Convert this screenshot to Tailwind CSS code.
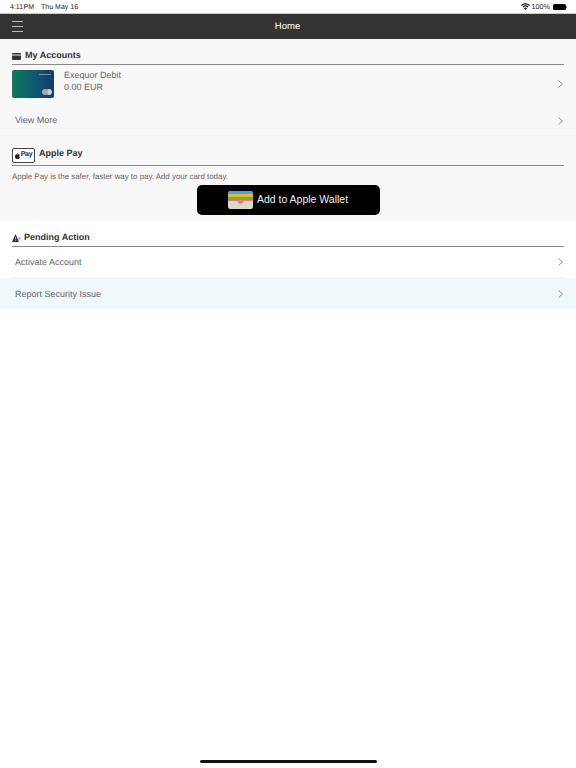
<!DOCTYPE html>
<html lang="en">
<head>
    <meta charset="UTF-8">
    <meta name="viewport" content="width=device-width, initial-scale=1.0">
    <title>Home</title>
    <script src="https://cdn.jsdelivr.net/npm/@tailwindcss/browser@4"></script>
</head>
<body class="relative h-[768px] w-[576px] overflow-hidden bg-white font-['Liberation_Sans',Arial,sans-serif] text-[#666] [text-rendering:geometricPrecision]">

    <!-- Status bar -->
    <div class="flex h-[13px] items-center justify-between pl-[10px] pr-[9px] pt-[1px] text-[7px] text-[#222]">
        <div class="flex gap-[7px] pt-[2px]"><span class="[word-spacing:-1.5px]">4:11 PM</span><span>Thu May 16</span></div>
        <div class="flex items-center gap-[2px]">
            <svg width="9" height="7" viewBox="0 0 18 14" fill="#111"><path d="M9 14 6 10.600a4.400 4.400 0 0 1 6 0zM4.600 9 3 7.200a8.800 8.800 0 0 1 12 0L13.400 9a6.500 6.500 0 0 0-8.800 0zM1.600 5.800 0 4a13.300 13.300 0 0 1 18 0l-1.600 1.800a11 11 0 0 0-14.800 0z"/></svg>
            <span class="pt-[1px] text-[7.200px]">100%</span>
            <div class="ml-[1px] flex items-center">
                <div class="h-[6px] w-[13px] rounded-[1.5px] bg-black"></div>
                <div class="h-[2px] w-[1px] bg-[#888]"></div>
            </div>
        </div>
    </div>

    <!-- Header -->
    <header class="relative flex h-[26px] items-center justify-center border-t border-[#ccc] bg-[#333] text-[9.500px] text-white">
        <div class="absolute left-[12px] top-[7px] flex w-[11px] flex-col gap-[4px]">
            <div class="h-px bg-[#bbb]"></div>
            <div class="h-px bg-[#bbb]"></div>
            <div class="h-px bg-[#bbb]"></div>
        </div>
        <span class="mr-px pt-[1px]">Home</span>
    </header>

    <!-- My Accounts -->
    <section class="h-[97px] border-b border-[#f1f1f1] bg-[#f8f8f8] px-[12px]">
        <div class="flex h-[26px] items-center gap-[4px] border-b border-[#888] pt-[9px] text-[9px] font-bold text-[#333]">
            <svg width="9" height="7" viewBox="0 0 9 7"><rect width="9" height="7" rx="1" fill="#333"/><rect y="1.500" width="9" height="1" fill="#eee"/></svg>
            <span>My Accounts</span>
        </div>
        <div class="flex h-[37px] items-center pt-[1px]">
            <div class="relative h-[28px] w-[42px] overflow-hidden rounded-[2px] bg-gradient-to-r from-[#0e7a55] via-[#0f5a73] to-[#163a68]">
                <div class="absolute right-[3px] top-[4px] h-px w-[12px] bg-white/40"></div>
                <div class="absolute bottom-[3px] right-[2px] size-[6px] rounded-full bg-[#c9cfcf]"></div>
                <div class="absolute bottom-[3px] right-[6px] size-[6px] rounded-full bg-[#9fa9aa]"></div>
            </div>
            <div class="ml-[10px] mb-[6px] flex-1 text-[9px] leading-[12px]">
                <div>Exequor Debit</div>
                <div>0.00 EUR</div>
            </div>
            <svg class="mr-[1px]" width="5" height="8" viewBox="0 0 5 8" fill="none" stroke="#777" stroke-width="0.800"><path d="M.5.5 4.500 4 .5 7.500"/></svg>
        </div>
        <div class="flex h-[34px] items-center justify-between pl-[3px] pr-[1px] pt-[3px] text-[9px]">
            <span class="pt-[1px]">View More</span>
            <svg width="5" height="8" viewBox="0 0 5 8" fill="none" stroke="#777" stroke-width="0.800"><path d="M.5.5 4.500 4 .5 7.500"/></svg>
        </div>
    </section>

    <!-- Apple Pay -->
    <section class="h-[85px] bg-[#f8f8f8] px-[12px]">
        <div class="flex h-[30px] items-start gap-[4px] border-b border-[#888] pt-[12px]">
            <div class="flex h-[15px] w-[23px] items-center justify-center rounded-[2px] border border-[#444] bg-white text-[7px] font-bold tracking-tighter text-[#222]">
                <svg class="mr-px" width="5" height="6" viewBox="0 0 10 12" fill="#222"><path d="M7 0c.1 1.200-.9 2.600-2.400 2.600C4.500 1.300 5.700.1 7 0zM5 3.200c.6 0 1.400-.6 2.500-.6 1 0 1.900.5 2.300 1.200-2 1.200-1.600 3.900.2 4.700C9.400 10 8.500 12 7.300 12c-.9 0-1.200-.5-2.200-.5S3.800 12 3 12C1.500 12 0 9.400 0 7c0-2.800 1.700-4.300 3.200-4.300 1 0 1.500.5 1.800.5z"/></svg>Pay
            </div>
            <span class="-mt-[1px] text-[9px] font-bold text-[#333]">Apple Pay</span>
        </div>
        <p class="pt-[5px] text-[7.900px] leading-[11px]">Apple Pay is the safer, faster way to pay. Add your card today.</p>
        <button class="mx-auto mt-[3px] flex h-[30px] w-[183px] items-center justify-center gap-[4px] rounded-[5px] bg-black text-[10.500px] text-[#eee]">
            <svg width="25" height="18" viewBox="0 0 25 18">
                <rect width="25" height="18" rx="2.500" fill="#dcd8cc"/>
                <path d="M0 2.500A2.500 2.500 0 0 1 2.500 0h20A2.500 2.500 0 0 1 25 2.500V3H0z" fill="#4aa3d8"/>
                <rect y="3" width="25" height="3" fill="#f0b42c"/>
                <rect y="6" width="25" height="3" fill="#5cb84c"/>
                <path d="M0 9h25v1h-8.500q-1 0-1.800 1.500-.8 1.500-2.200 1.500t-2.200-1.500Q9.500 10 8.500 10H0z" fill="#ef7f6c"/>
            </svg>
            <span>Add to Apple Wallet</span>
        </button>
    </section>

    <!-- Pending Action -->
    <section>
        <div class="mx-[12px] flex h-[26px] items-center gap-[3px] border-b border-[#888] pt-[8px] text-[9px] font-bold text-[#333]">
            <svg width="9" height="8" viewBox="0 0 9 8"><path d="M3.500 0 7 8H0z" fill="#333"/><path d="M3.200 3h.6v2.500h-.6zM3.200 6h.6v.8h-.6z" fill="#fff"/><circle cx="7.500" cy="4.500" r="1.500" fill="#bbb"/></svg>
            <span>Pending Action</span>
        </div>
        <div class="mx-[12px] flex h-[31px] items-center justify-between border-b border-[#f1f1f1] pl-[3px] pr-[1px] text-[9px]">
            <span class="pt-[1px]">Activate Account</span>
            <svg width="5" height="8" viewBox="0 0 5 8" fill="none" stroke="#777" stroke-width="0.800"><path d="M.5.5 4.500 4 .5 7.500"/></svg>
        </div>
        <div class="flex h-[31px] items-center justify-between bg-[#f0f7fb] pl-[15px] pr-[13px] text-[9px]">
            <span class="pt-[2px]">Report Security Issue</span>
            <svg width="5" height="8" viewBox="0 0 5 8" fill="none" stroke="#777" stroke-width="0.800"><path d="M.5.5 4.500 4 .5 7.500"/></svg>
        </div>
    </section>

    <!-- Home indicator -->
    <div class="absolute left-[200px] top-[760px] h-[3px] w-[177px] rounded-full bg-[#111]"></div>
</body>
</html>
